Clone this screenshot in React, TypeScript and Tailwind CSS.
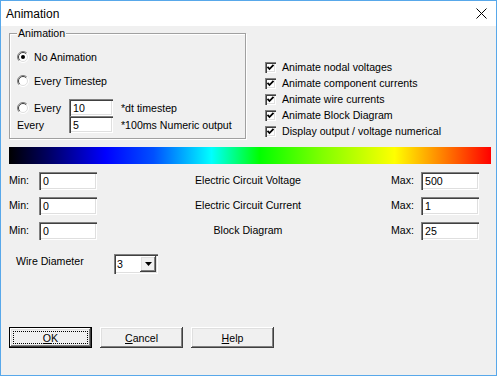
import React from "react";

const sunken =
  "bg-white shadow-[inset_1px_1px_0_#808080,inset_2px_2px_0_#404040,inset_-1px_-1px_0_#ffffff,inset_-2px_-2px_0_#dfdfdf]";
const raised =
  "shadow-[inset_-1px_-1px_0_#404040,inset_1px_1px_0_#ffffff,inset_-2px_-2px_0_#808080,inset_2px_2px_0_#dfdfdf]";

function Radio({ checked }: { checked?: boolean }) {
  return (
    <svg width="12" height="12" viewBox="0 0 12 12" className="shrink-0">
      <circle cx="6" cy="6" r="5.5" fill="#ffffff" />
      <path d="M2.1 9.9 A5.5 5.5 0 0 1 9.9 2.1" stroke="#808080" strokeWidth="1" fill="none" />
      <path d="M2.8 9.2 A4.5 4.5 0 0 1 9.2 2.8" stroke="#404040" strokeWidth="1" fill="none" />
      <path d="M9.9 2.1 A5.5 5.5 0 0 1 2.1 9.9" stroke="#ffffff" strokeWidth="1" fill="none" />
      <path d="M9.2 2.8 A4.5 4.5 0 0 1 2.8 9.2" stroke="#dfdfdf" strokeWidth="1" fill="none" />
      {checked && <circle cx="6" cy="6" r="2" fill="#000000" />}
    </svg>
  );
}

function Check({ label }: { label: string }) {
  return (
    <div className="flex h-[16px] items-center">
      <div className={`relative h-[11px] w-[11px] shrink-0 ${sunken}`}>
        <svg width="11" height="11" viewBox="0 0 11 11" className="block">
          <path d="M2.5 4.8 L4.5 7 L8.5 2.8" stroke="#000" strokeWidth="1.8" fill="none" />
        </svg>
      </div>
      <span className="ml-[6px] whitespace-nowrap">{label}</span>
    </div>
  );
}

function Field({ value, w, h }: { value: string; w: string; h: string }) {
  return (
    <div className={`${w} ${h} ${sunken} flex items-center pl-[4px] shrink-0`}>
      <span>{value}</span>
    </div>
  );
}

function RangeRow({ label, min, max }: { label: string; min: string; max: string }) {
  return (
    <div className="flex h-[18px] items-center pl-[8px]">
      <span className="w-[30px] shrink-0 mb-[2px]">Min:</span>
      <Field value={min} w="w-[58px]" h="h-[18px]" />
      <span className="w-[294px] shrink-0 pl-[8px] text-center whitespace-nowrap mb-[2px]">{label}</span>
      <span className="w-[30px] shrink-0 mb-[2px]">Max:</span>
      <Field value={max} w="w-[58px]" h="h-[18px]" />
    </div>
  );
}

function Button({ children, def }: { children: React.ReactNode; def?: boolean }) {
  if (def) {
    return (
      <div className="flex h-[21px] w-[83px] border border-black">
        <div className={`flex flex-1 p-[3px] ${raised}`}>
          <div className="flex flex-1 items-center justify-center border border-dotted border-black">
            {children}
          </div>
        </div>
      </div>
    );
  }
  return (
    <div className={`flex h-[21px] w-[83px] items-center justify-center ${raised}`}>{children}</div>
  );
}

export default function App() {
  return (
    <div className="flex h-[376px] w-[497px] flex-col border border-[#58a8ea] bg-[#f0f0f0] font-['Liberation_Sans',Arial,sans-serif] text-[10.6px] leading-[14px] text-black">
      {/* Title bar */}
      <div className="flex h-[25px] items-center justify-between bg-white pl-[5px] pr-[9px]">
        <span className="text-[12px]">Animation</span>
        <svg width="11" height="11" viewBox="0 0 11 11">
          <path d="M0.5 0.5 L10.5 10.5 M10.5 0.5 L0.5 10.5" stroke="#000" strokeWidth="1" />
        </svg>
      </div>

      {/* Body */}
      <div className="flex flex-1 flex-col">
        <div className="flex items-start">
          {/* Group box */}
          <div className="relative ml-[8px] mt-[7px] h-[106px] w-[237px] border border-[#a0a0a0] shadow-[1px_1px_0_#ffffff,inset_1px_1px_0_#ffffff]">
            <span className="absolute left-[7px] top-[-8px] bg-[#f0f0f0] px-[1px]">Animation</span>
            <div className="flex flex-col pl-[7px] pt-[15px]">
              <div className="flex h-[16px] items-center">
                <Radio checked />
                <span className="ml-[5px]">No Animation</span>
              </div>
              <div className="mt-[8px] flex h-[16px] items-center">
                <Radio />
                <span className="ml-[5px]">Every Timestep</span>
              </div>
              <div className="mt-[10px] flex h-[17px] items-center">
                <div className="flex w-[52px] items-center">
                  <Radio />
                  <span className="ml-[5px]">Every</span>
                </div>
                <Field value="10" w="w-[44px]" h="h-[17px]" />
                <span className="ml-[8px] whitespace-nowrap">*dt timestep</span>
              </div>
              <div className="flex h-[17px] items-center">
                <span className="w-[52px]">Every</span>
                <Field value="5" w="w-[44px]" h="h-[17px]" />
                <span className="ml-[8px] whitespace-nowrap">*100ms Numeric output</span>
              </div>
            </div>
          </div>

          {/* Checkboxes */}
          <div className="ml-[19px] mt-[33px] flex flex-col">
            <Check label="Animate nodal voltages" />
            <Check label="Animate component currents" />
            <Check label="Animate wire currents" />
            <Check label="Animate Block Diagram" />
            <Check label="Display output / voltage numerical" />
          </div>
        </div>

        {/* Gradient */}
        <div className="ml-[8px] mt-[8px] h-[17px] w-[482px] bg-[linear-gradient(to_right,#000000_0%,#000060_8%,#0000ff_20%,#0050ff_30%,#00ffff_42%,#00ff00_52%,#80ff00_65%,#ffff00_80%,#ff8000_90%,#ff0000_100%)]" />

        {/* Ranges */}
        <div className="mt-[8px] flex flex-col gap-[7px]">
          <RangeRow label="Electric Circuit Voltage" min="0" max="500" />
          <RangeRow label="Electric Circuit Current" min="0" max="1" />
          <RangeRow label="Block Diagram" min="0" max="25" />
        </div>

        {/* Wire diameter */}
        <div className="mt-[14px] flex items-start pl-[15px]">
          <span className="w-[98px] shrink-0">Wire Diameter</span>
          <div className={`flex h-[20px] w-[44px] items-center pl-[3px] pr-[2px] ${sunken}`}>
            <span className="flex-1">3</span>
            <div className={`flex h-[16px] w-[16px] items-center justify-center bg-[#f0f0f0] ${raised}`}>
              <svg width="7" height="4" viewBox="0 0 7 4">
                <path d="M0 0 H7 L3.5 4 Z" fill="#000" />
              </svg>
            </div>
          </div>
        </div>

        {/* Buttons */}
        <div className="mt-[53px] flex gap-[8px] pl-[8px]">
          <Button def>
            <span>
              <span className="underline">O</span>K
            </span>
          </Button>
          <Button>
            <span>
              <span className="underline">C</span>ancel
            </span>
          </Button>
          <Button>
            <span>
              <span className="underline">H</span>elp
            </span>
          </Button>
        </div>
      </div>
    </div>
  );
}
